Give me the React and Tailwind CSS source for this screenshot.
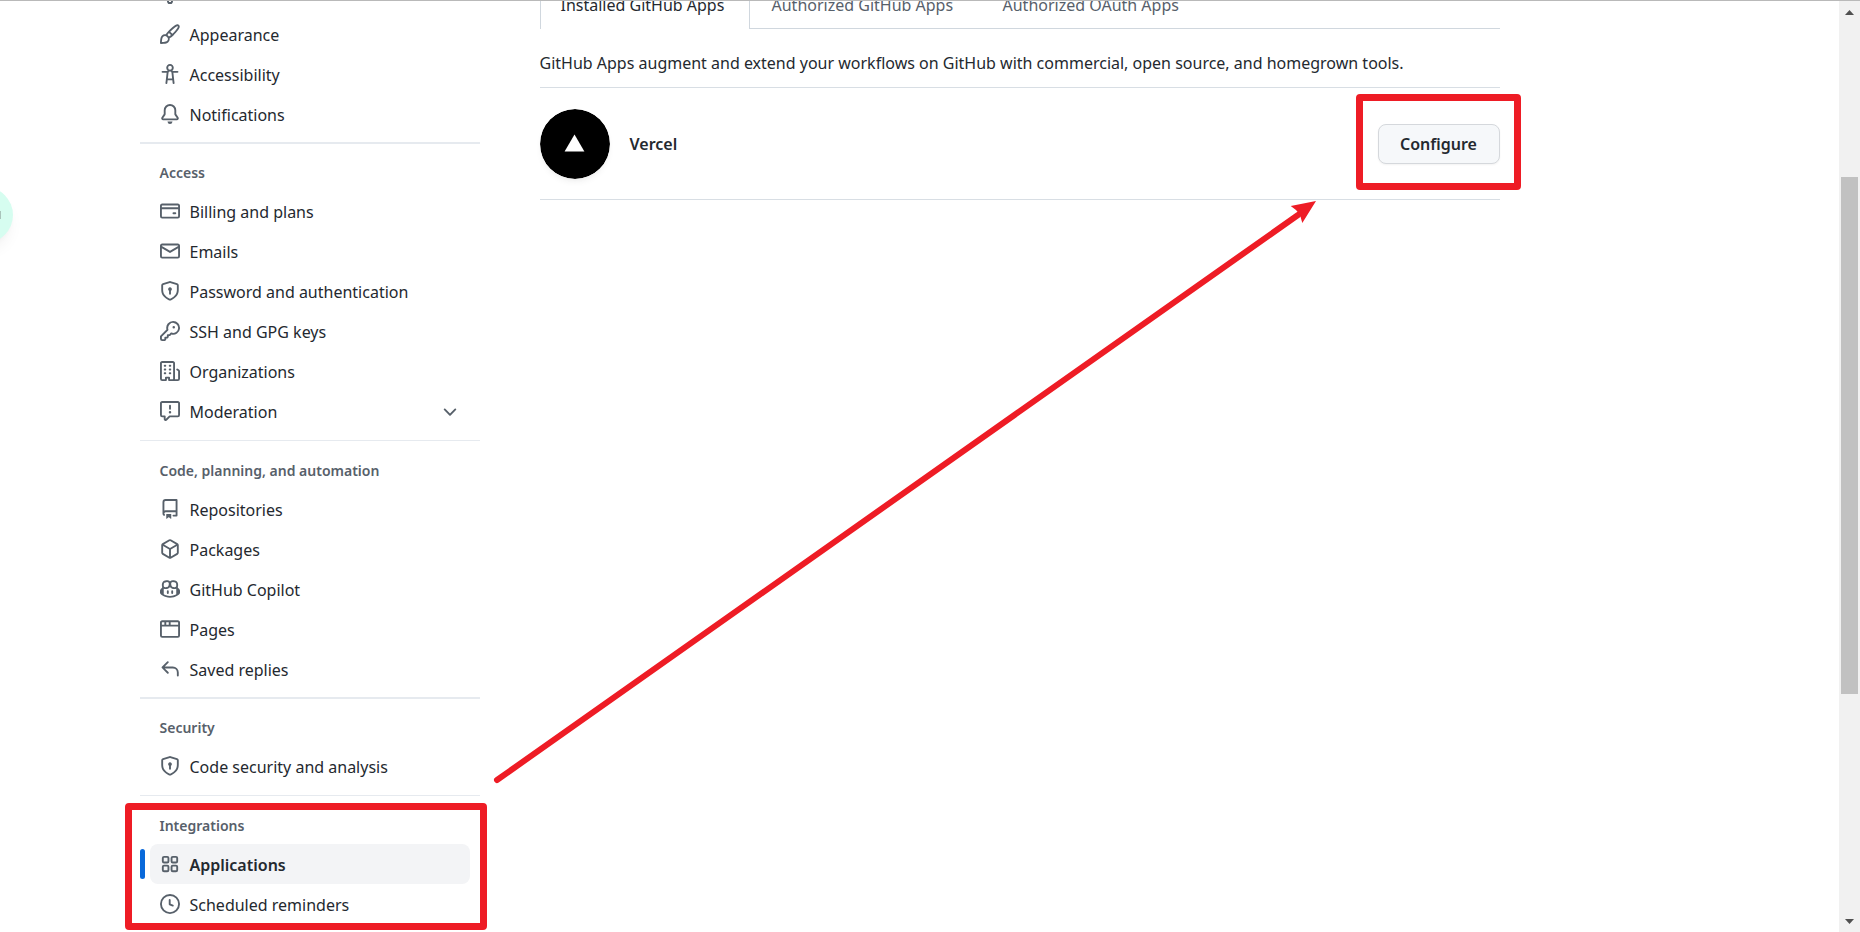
const ICONS = {
  gear: ["M8 0a8.2 8.2 0 0 1 .701.031C9.444.095 9.99.645 10.16 1.29l.288 1.107c.018.066.079.158.212.224.231.114.454.243.668.386.123.082.233.09.299.071l1.103-.303c.644-.176 1.392.021 1.82.63.27.385.506.792.704 1.218.315.675.111 1.422-.364 1.891l-.814.806c-.049.048-.098.147-.088.294.016.257.016.515 0 .772-.01.147.038.246.088.294l.814.806c.475.469.679 1.216.364 1.891a7.977 7.977 0 0 1-.704 1.217c-.428.61-1.176.807-1.82.63l-1.102-.302c-.067-.019-.177-.011-.3.071a5.909 5.909 0 0 1-.668.386c-.133.066-.194.158-.211.224l-.29 1.106c-.168.646-.715 1.196-1.458 1.26a8.006 8.006 0 0 1-1.402 0c-.743-.064-1.289-.614-1.458-1.26l-.289-1.106c-.018-.066-.079-.158-.212-.224a5.738 5.738 0 0 1-.668-.386c-.123-.082-.233-.09-.299-.071l-1.103.303c-.644.176-1.392-.021-1.82-.63a8.12 8.12 0 0 1-.704-1.218c-.315-.675-.111-1.422.363-1.891l.815-.806c.05-.048.098-.147.088-.294a6.214 6.214 0 0 1 0-.772c.01-.147-.038-.246-.088-.294l-.815-.806C.635 6.045.431 5.298.746 4.623a7.92 7.92 0 0 1 .704-1.217c.428-.61 1.176-.807 1.82-.63l1.102.302c.067.019.177.011.3-.071.214-.143.437-.272.668-.386.133-.066.194-.158.211-.224l.29-1.106C6.009.645 6.556.095 7.299.03 7.53.01 7.764 0 8 0Zm-.571 1.525c-.036.003-.108.036-.137.146l-.289 1.105c-.147.561-.549.967-.998 1.189-.173.086-.34.183-.5.29-.417.278-.97.423-1.529.27l-1.103-.303c-.109-.03-.175.016-.195.045-.22.312-.412.644-.573.99-.014.031-.021.11.059.19l.815.806c.411.406.562.957.53 1.456a4.709 4.709 0 0 0 0 .582c.032.499-.119 1.05-.53 1.456l-.815.806c-.081.08-.073.159-.059.19.162.346.353.677.573.989.02.03.085.076.195.046l1.102-.303c.56-.153 1.113-.008 1.53.27.161.107.328.204.501.29.447.222.85.629.997 1.189l.289 1.105c.029.109.101.143.137.146a6.6 6.6 0 0 0 1.142 0c.036-.003.108-.036.137-.146l.289-1.105c.147-.561.549-.967.998-1.189.173-.086.34-.183.5-.29.417-.278.97-.423 1.529-.27l1.103.303c.109.029.175-.016.195-.045.22-.313.411-.644.573-.99.014-.031.021-.11-.059-.19l-.815-.806c-.411-.406-.562-.957-.53-1.456a4.709 4.709 0 0 0 0-.582c-.032-.499.119-1.05.53-1.456l.815-.806c.081-.08.073-.159.059-.19a6.464 6.464 0 0 0-.573-.989c-.02-.03-.085-.076-.195-.046l-1.102.303c-.56.153-1.113.008-1.53-.27a4.44 4.44 0 0 0-.501-.29c-.447-.222-.85-.629-.997-1.189l-.289-1.105c-.029-.11-.101-.143-.137-.146a6.6 6.6 0 0 0-1.142 0Z"],
  paintbrush: ["M11.134 1.535c.7-.509 1.416-.942 2.076-1.155.649-.21 1.463-.267 2.069.34.603.601.568 1.411.368 2.07-.202.668-.624 1.39-1.125 2.096-1.011 1.424-2.496 2.987-3.775 4.249-1.098 1.084-2.132 1.839-3.04 2.3a3.744 3.744 0 0 1-1.055 3.217c-.431.431-1.065.691-1.657.861-.614.177-1.294.287-1.914.357A21.151 21.151 0 0 1 .797 16H.743l.007-.75H.749L.742 16a.75.75 0 0 1-.743-.742l.743-.008-.742.007v-.054a21.25 21.25 0 0 1 .13-2.284c.067-.647.187-1.287.358-1.914.17-.591.43-1.226.86-1.657a3.746 3.746 0 0 1 3.227-1.054c.466-.893 1.225-1.907 2.314-2.982 1.271-1.255 2.833-2.75 4.245-3.777ZM1.62 13.089c-.051.464-.086.929-.104 1.395.466-.018.932-.053 1.396-.104a10.511 10.511 0 0 0 1.668-.309c.526-.151.856-.325 1.011-.48a2.25 2.25 0 1 0-3.182-3.182c-.155.155-.329.485-.48 1.01a10.515 10.515 0 0 0-.309 1.67Zm10.396-10.34c-1.224.89-2.605 2.189-3.822 3.384l1.718 1.718c1.21-1.205 2.51-2.597 3.387-3.833.47-.662.78-1.227.912-1.662.134-.444.032-.551.009-.575h-.001V1.78c-.014-.014-.113-.113-.548.027-.432.14-.995.462-1.655.942Zm-4.832 7.266-.001.001a9.859 9.859 0 0 0 1.63-1.142L7.155 7.216a9.7 9.7 0 0 0-1.161 1.607c.482.302.889.71 1.19 1.192Z"],
  accessibility: ["M9.923 5.302c.063.063.122.129.178.198H14A.75.75 0 0 1 14 7h-3.3l.578 5.163.362 2.997a.75.75 0 0 1-1.49.18L9.868 13H6.132l-.282 2.34a.75.75 0 0 1-1.49-.18l.362-2.997L5.3 7H2a.75.75 0 0 1 0-1.5h3.9a2.54 2.54 0 0 1 .176-.198 3 3 0 1 1 3.847 0ZM9.2 7.073h-.001a1.206 1.206 0 0 0-2.398 0L6.305 11.5h3.39ZM9.5 3a1.5 1.5 0 1 0-3.001.001A1.5 1.5 0 0 0 9.5 3Z"],
  bell: ["M8 16a2 2 0 0 0 1.985-1.75c.017-.137-.097-.25-.235-.25h-3.5c-.138 0-.252.113-.235.25A2 2 0 0 0 8 16ZM3 5a5 5 0 0 1 10 0v2.947c0 .05.015.098.042.139l1.703 2.555A1.519 1.519 0 0 1 13.482 13H2.518a1.516 1.516 0 0 1-1.263-2.36l1.703-2.554A.255.255 0 0 0 3 7.947Zm5-3.5A3.5 3.5 0 0 0 4.5 5v2.947c0 .346-.102.683-.294.97l-1.703 2.556a.017.017 0 0 0-.003.01l.001.006c0 .002.002.004.004.006l.006.004.007.001h10.964l.007-.001.006-.004.004-.006.001-.007a.017.017 0 0 0-.003-.01l-1.703-2.554a1.745 1.745 0 0 1-.294-.97V5A3.5 3.5 0 0 0 8 1.5Z"],
  card: ["M10.75 9a.75.75 0 0 0 0 1.5h1.5a.75.75 0 0 0 0-1.5h-1.5Z", "M0 3.75C0 2.784.784 2 1.75 2h12.5c.966 0 1.75.784 1.75 1.75v8.5A1.75 1.75 0 0 1 14.25 14H1.75A1.75 1.75 0 0 1 0 12.25ZM14.5 6.5h-13v5.75c0 .138.112.25.25.25h12.5a.25.25 0 0 0 .25-.25Zm0-2.75a.25.25 0 0 0-.25-.25H1.75a.25.25 0 0 0-.25.25V5h13Z"],
  mail: ["M1.75 2h12.5c.966 0 1.75.784 1.75 1.75v8.5A1.75 1.75 0 0 1 14.25 14H1.75A1.75 1.75 0 0 1 0 12.25v-8.5C0 2.784.784 2 1.75 2ZM1.5 12.251c0 .138.112.25.25.25h12.5a.25.25 0 0 0 .25-.25V5.809L8.38 9.397a.75.75 0 0 1-.76 0L1.5 5.809v6.442Zm13-8.181v-.32a.25.25 0 0 0-.25-.25H1.75a.25.25 0 0 0-.25.25v.32L8 7.88Z"],
  shield: ["m8.533.133 5.25 1.68A1.75 1.75 0 0 1 15 3.48V7c0 1.566-.32 3.182-1.303 4.682-.983 1.498-2.585 2.813-5.032 3.855a1.697 1.697 0 0 1-1.33 0c-2.447-1.042-4.049-2.357-5.032-3.855C1.32 10.182 1 8.566 1 7V3.48a1.755 1.755 0 0 1 1.217-1.667l5.25-1.68a1.748 1.748 0 0 1 1.066 0Zm-.61 1.429.001.001-5.25 1.68a.251.251 0 0 0-.174.237V7c0 1.36.275 2.666 1.057 3.859.784 1.194 2.121 2.342 4.366 3.298a.196.196 0 0 0 .154 0c2.245-.957 3.582-2.103 4.366-3.297C13.225 9.666 13.5 8.358 13.5 7V3.48a.25.25 0 0 0-.174-.238l-5.25-1.68a.25.25 0 0 0-.153 0ZM9.5 6.5c0 .536-.286 1.032-.75 1.3v2.45a.75.75 0 0 1-1.5 0V7.8A1.5 1.5 0 1 1 9.5 6.5Z"],
  key: ["M10.5 0a5.499 5.499 0 1 1-1.288 10.848l-.932.932a.749.749 0 0 1-.53.22H7v.75a.749.749 0 0 1-.22.53l-.5.5a.749.749 0 0 1-.53.22H5v.75a.749.749 0 0 1-.22.53l-.5.5a.749.749 0 0 1-.53.22h-2A1.75 1.75 0 0 1 0 14.25v-2c0-.199.079-.389.22-.53l4.932-4.932A5.5 5.5 0 0 1 10.5 0Zm-4 5.5c-.001.431.069.86.205 1.269a.75.75 0 0 1-.181.768L1.5 12.56v1.69c0 .138.112.25.25.25h1.69l.06-.06v-1.19a.75.75 0 0 1 .75-.75h1.19l.06-.06v-1.19a.75.75 0 0 1 .75-.75h1.19l1.023-1.025a.75.75 0 0 1 .768-.18A4 4 0 1 0 6.5 5.5ZM11 6a1 1 0 1 1 0-2 1 1 0 0 1 0 2Z"],
  organization: ["M1.75 16A1.75 1.75 0 0 1 0 14.25V1.75C0 .784.784 0 1.75 0h8.5C11.216 0 12 .784 12 1.75v12.5c0 .085-.006.168-.018.25h2.268a.25.25 0 0 0 .25-.25V8.285a.25.25 0 0 0-.111-.208l-1.055-.703a.749.749 0 1 1 .832-1.248l1.055.703c.487.325.779.871.779 1.456v5.965A1.75 1.75 0 0 1 14.25 16h-3.5a.766.766 0 0 1-.197-.026c-.099.017-.2.026-.303.026h-3a.75.75 0 0 1-.75-.75V14h-1v1.25a.75.75 0 0 1-.75.75Zm-.25-1.75c0 .138.112.25.25.25H4v-1.25a.75.75 0 0 1 .75-.75h2.5a.75.75 0 0 1 .75.75v1.25h2.25a.25.25 0 0 0 .25-.25V1.75a.25.25 0 0 0-.25-.25h-8.5a.25.25 0 0 0-.25.25ZM3.75 6h.5a.75.75 0 0 1 0 1.5h-.5a.75.75 0 0 1 0-1.5ZM3 3.75A.75.75 0 0 1 3.75 3h.5a.75.75 0 0 1 0 1.5h-.5A.75.75 0 0 1 3 3.75Zm4 3A.75.75 0 0 1 7.75 6h.5a.75.75 0 0 1 0 1.5h-.5A.75.75 0 0 1 7 6.75ZM7.75 3h.5a.75.75 0 0 1 0 1.5h-.5a.75.75 0 0 1 0-1.5ZM3 9.75A.75.75 0 0 1 3.75 9h.5a.75.75 0 0 1 0 1.5h-.5A.75.75 0 0 1 3 9.75ZM7.75 9h.5a.75.75 0 0 1 0 1.5h-.5a.75.75 0 0 1 0-1.5Z"],
  report: ["M0 1.75C0 .784.784 0 1.75 0h12.5C15.216 0 16 .784 16 1.75v9.5A1.75 1.75 0 0 1 14.25 13H8.06l-2.573 2.573A1.458 1.458 0 0 1 3 14.543V13H1.75A1.75 1.75 0 0 1 0 11.25Zm1.75-.25a.25.25 0 0 0-.25.25v9.5c0 .138.112.25.25.25h2a.75.75 0 0 1 .75.75v2.19l2.72-2.72a.749.749 0 0 1 .53-.22h6.5a.25.25 0 0 0 .25-.25v-9.5a.25.25 0 0 0-.25-.25Zm7 2.25v2.5a.75.75 0 0 1-1.5 0v-2.5a.75.75 0 0 1 1.5 0ZM9 9a1 1 0 1 1-2 0 1 1 0 0 1 2 0Z"],
  repo: ["M2 2.5A2.5 2.5 0 0 1 4.5 0h8.75a.75.75 0 0 1 .75.75v12.5a.75.75 0 0 1-.75.75h-2.5a.75.75 0 0 1 0-1.5h1.75v-2h-8a1 1 0 0 0-.714 1.7.75.75 0 1 1-1.072 1.05A2.495 2.495 0 0 1 2 11.5Zm10.5-1h-8a1 1 0 0 0-1 1v6.708A2.486 2.486 0 0 1 4.5 9h8ZM5 12.25a.25.25 0 0 1 .25-.25h3.5a.25.25 0 0 1 .25.25v3.25a.25.25 0 0 1-.4.2l-1.45-1.087a.249.249 0 0 0-.3 0L5.4 15.7a.25.25 0 0 1-.4-.2Z"],
  package: ["m8.878.392 5.25 3.045c.54.314.872.89.872 1.514v6.098a1.75 1.75 0 0 1-.872 1.514l-5.25 3.045a1.75 1.75 0 0 1-1.756 0l-5.25-3.045A1.75 1.75 0 0 1 1 11.049V4.951c0-.624.332-1.201.872-1.514L7.122.392a1.75 1.75 0 0 1 1.756 0ZM7.875 1.69l-4.63 2.685L8 7.133l4.755-2.758-4.63-2.685a.248.248 0 0 0-.25 0ZM2.5 5.677v5.372c0 .09.047.171.125.216l4.625 2.683V8.432Zm6.25 8.271 4.625-2.683a.25.25 0 0 0 .125-.216V5.677L8.75 8.432Z"],
  copilot: ["M7.998 15.035c-4.562 0-7.873-2.914-7.998-3.749V9.338c.085-.628.677-1.686 1.588-2.065.013-.07.024-.143.036-.218.029-.183.06-.384.126-.612-.201-.508-.254-1.084-.254-1.656 0-.87.128-1.769.693-2.484.579-.733 1.494-1.124 2.724-1.261 1.206-.134 2.262.034 2.944.765.05.053.096.108.139.165.044-.057.094-.112.143-.165.682-.731 1.738-.899 2.944-.765 1.23.137 2.145.528 2.724 1.261.566.715.693 1.614.693 2.484 0 .572-.053 1.148-.254 1.656.066.228.098.429.126.612.012.076.024.148.037.218.924.385 1.522 1.471 1.591 2.095v1.872c0 .766-3.351 3.795-8.002 3.795Zm0-1.485c2.28 0 4.584-1.11 5.002-1.433V7.862l-.023-.116c-.49.21-1.075.291-1.727.291-1.146 0-2.059-.327-2.71-.991A3.222 3.222 0 0 1 8 6.303a3.24 3.24 0 0 1-.544.743c-.65.664-1.563.991-2.71.991-.652 0-1.236-.081-1.727-.291l-.023.116v4.255c.419.323 2.722 1.433 5.002 1.433ZM6.762 2.83c-.193-.206-.637-.413-1.682-.297-1.019.113-1.479.404-1.713.7-.247.312-.369.789-.369 1.554 0 .793.129 1.171.308 1.371.162.181.519.379 1.442.379.853 0 1.339-.235 1.638-.54.315-.322.527-.827.617-1.553.117-.935-.037-1.395-.241-1.614Zm4.155-.297c-1.044-.116-1.488.091-1.681.297-.204.219-.359.679-.242 1.614.091.726.303 1.231.618 1.553.299.305.784.54 1.638.54.922 0 1.28-.198 1.442-.379.179-.2.308-.578.308-1.371 0-.765-.123-1.242-.37-1.554-.233-.296-.693-.587-1.713-.7Z", "M6.25 9.037a.75.75 0 0 1 .75.75v1.501a.75.75 0 0 1-1.5 0V9.787a.75.75 0 0 1 .75-.75Zm4.25.75v1.501a.75.75 0 0 1-1.5 0V9.787a.75.75 0 0 1 1.5 0Z"],
  browser: ["M0 2.75C0 1.784.784 1 1.75 1h12.5c.966 0 1.75.784 1.75 1.75v10.5A1.75 1.75 0 0 1 14.25 15H1.75A1.75 1.75 0 0 1 0 13.25ZM14.5 6h-13v7.25c0 .138.112.25.25.25h12.5a.25.25 0 0 0 .25-.25Zm-6-3.5v2h6V2.75a.25.25 0 0 0-.25-.25ZM5 2.5v2h2v-2Zm-3.25 0a.25.25 0 0 0-.25.25V4.5h2v-2Z"],
  reply: ["M6.78 1.97a.75.75 0 0 1 0 1.06L3.81 6h6.44A4.75 4.75 0 0 1 15 10.75v2.5a.75.75 0 0 1-1.5 0v-2.5a3.25 3.25 0 0 0-3.25-3.25H3.81l2.97 2.97a.749.749 0 0 1-.326 1.275.749.749 0 0 1-.734-.215L1.47 7.28a.75.75 0 0 1 0-1.06l4.25-4.25a.75.75 0 0 1 1.06 0Z"],
  clock: ["M8 0a8 8 0 1 1 0 16A8 8 0 0 1 8 0ZM1.5 8a6.5 6.5 0 1 0 13 0 6.5 6.5 0 0 0-13 0Zm7-3.25v2.992l2.028.812a.75.75 0 0 1-.557 1.392l-2.5-1A.751.751 0 0 1 7 8.25v-3.5a.75.75 0 0 1 1.5 0Z"],
  chevron: ["M12.78 6.22a.749.749 0 0 1 0 1.06l-4.25 4.25a.749.749 0 0 1-1.06 0L3.22 7.28a.749.749 0 1 1 1.06-1.06L8 9.939l3.72-3.719a.749.749 0 0 1 1.06 0Z"],
};

function Icon({ name }) {
  return (
    <svg className="size-5 shrink-0 text-[#57606a]" viewBox="0 0 16 16" fill="currentColor" aria-hidden="true">
      {name === "apps" ? (
        <g fill="none" stroke="currentColor" strokeWidth="1.5">
          <rect x="2.25" y="2.25" width="4.5" height="4.5" rx="1" />
          <rect x="9.25" y="2.25" width="4.5" height="4.5" rx="1" />
          <rect x="2.25" y="9.25" width="4.5" height="4.5" rx="1" />
          <rect x="9.25" y="9.25" width="4.5" height="4.5" rx="1" />
        </g>
      ) : (
        ICONS[name].map((d) => <path key={d} d={d} />)
      )}
    </svg>
  );
}

const SECTIONS = [
  {
    items: [
      ["gear", "Account"],
      ["paintbrush", "Appearance"],
      ["accessibility", "Accessibility"],
      ["bell", "Notifications"],
    ],
  },
  {
    title: "Access",
    thick: true,
    items: [
      ["card", "Billing and plans"],
      ["mail", "Emails"],
      ["shield", "Password and authentication"],
      ["key", "SSH and GPG keys"],
      ["organization", "Organizations"],
      ["report", "Moderation"],
    ],
  },
  {
    title: "Code, planning, and automation",
    items: [
      ["repo", "Repositories"],
      ["package", "Packages"],
      ["copilot", "GitHub Copilot"],
      ["browser", "Pages"],
      ["reply", "Saved replies"],
    ],
  },
  { title: "Security", thick: true, items: [["shield", "Code security and analysis"]] },
  {
    title: "Integrations",
    marked: true,
    items: [
      ["apps", "Applications"],
      ["clock", "Scheduled reminders"],
    ],
  },
];

const ROW = "flex h-10 w-full items-center gap-[10px] rounded-lg px-[10px] text-left";

function NavItem({ icon, label }) {
  if (label === "Moderation") {
    return (
      <li className="px-[10px]">
        <button type="button" aria-expanded="false" className={ROW}>
          <Icon name={icon} />
          <span className="grow pt-px">{label}</span>
          <Icon name="chevron" />
        </button>
      </li>
    );
  }
  const active = label === "Applications";
  return (
    <li className="relative px-[10px]">
      {active && <span className="absolute top-[5px] left-0 h-[30px] w-[5px] rounded-full bg-[#0969da]" />}
      <a href="#" aria-current={active ? "page" : undefined} className={active ? `${ROW} bg-[#f3f4f6] font-semibold` : ROW}>
        <Icon name={icon} />
        <span className="pt-px">{label}</span>
      </a>
    </li>
  );
}

function NavSection({ section }) {
  return (
    <section className="relative">
      {section.title && (
        <>
          <hr className={section.thick ? "mt-2 border-t-2 border-[#e6eaef]" : "mt-[9px] border-t border-[#e6eaef]"} />
          <h3
            className={
              section.thick
                ? "flex h-[47px] items-end px-5 pb-[7px] text-sm leading-[22px] font-semibold text-[#57606a]"
                : "flex h-12 items-end px-5 pb-[7px] text-sm leading-[22px] font-semibold text-[#57606a]"
            }
          >
            {section.title}
          </h3>
        </>
      )}
      <ul>
        {section.items.map(([icon, label]) => (
          <NavItem key={label} icon={icon} label={label} />
        ))}
      </ul>
      {section.marked && (
        <div className="pointer-events-none absolute top-2 -right-[7px] -bottom-[6px] -left-[15px] rounded-sm border-7 border-[#ee1c25]" />
      )}
    </section>
  );
}

function Scrollbar() {
  return (
    <div className="flex w-[21px] shrink-0 flex-col items-center justify-between bg-[#f1f1f1] pt-[9px] pb-2" aria-hidden="true">
      <svg className="h-[5px] w-[9px]" viewBox="0 0 9 5" fill="#505050">
        <path d="M4.500 0 9 5H0Z" />
      </svg>
      <div className="mt-[162px] mb-[225px] w-[17px] grow bg-[#c1c1c1]" />
      <svg className="h-[5px] w-[9px]" viewBox="0 0 9 5" fill="#505050">
        <path d="M0 0H9L4.500 5Z" />
      </svg>
    </div>
  );
}

export default function App() {
  return (
    <div className="relative flex h-screen overflow-hidden border-t border-[#b9b9b9] bg-white font-['Noto_Sans','Open_Sans',sans-serif] text-base text-[#24292f]">
      <div className="min-w-0 grow">
        <div className="mx-auto flex max-w-[1600px] gap-[60px] pr-5 pl-5">
          <nav aria-label="Settings" className="-mt-[27px] w-[340px] shrink-0">
            {SECTIONS.map((s, i) => (
              <NavSection key={i} section={s} />
            ))}
          </nav>

          <main className="min-w-0 max-w-[960px] grow">
            <div className="-mt-5 flex h-12 text-[#57606a]">
              <a href="#" aria-current="page" className="min-w-[210px] border-x border-[#d0d7de] px-5 pt-3 leading-6 text-[#24292f]">
                Installed GitHub Apps
              </a>
              <div className="flex grow border-b border-[#d0d7de]">
                <a href="#" className="min-w-[231px] px-[22px] pt-3 leading-6">Authorized GitHub Apps</a>
                <a href="#" className="min-w-[231px] px-[22px] pt-3 leading-6">Authorized OAuth Apps</a>
              </div>
            </div>
            <p className="pt-[22px] pb-3 leading-6">
              GitHub Apps augment and extend your workflows on GitHub with commercial, open source, and homegrown tools.
            </p>
            <div className="flex items-center gap-5 border-y border-[#d8dee4] pt-[21px] pb-5">
              <svg className="size-[70px] shrink-0 rounded-full shadow-md shadow-black/5" viewBox="0 0 70 70" role="img" aria-label="Vercel logo">
                <circle cx="35" cy="35" r="35" fill="#000" />
                <path d="M34.500 25.500 44.400 42.500H24.600Z" fill="#fff" />
              </svg>
              <a href="#" className="grow font-semibold">Vercel</a>
              <div className="relative">
                <button type="button" className="h-10 w-[122px] rounded-lg border border-[#d5d8dc] bg-[#f6f8fa] font-semibold shadow-xs">
                  Configure
                </button>
                <div className="pointer-events-none absolute -top-[30px] -right-[21px] -bottom-[26px] -left-[22px] rounded-sm border-7 border-[#ee1c25]" />
              </div>
            </div>
          </main>
        </div>
      </div>

      <div className="absolute top-[186px] -left-[43px] flex size-14 items-center justify-end rounded-full bg-[#d6fdf0] shadow-lg shadow-black/5">
        <span className="mr-3 h-2 w-[2px] bg-[#a9c4bb]" />
      </div>

      <svg className="pointer-events-none absolute top-[190px] left-[480px] h-[600px] w-[850px]" viewBox="480 191 850 600" aria-hidden="true">
        <path d="M497 780 1298 215" stroke="#ee1c25" strokeWidth="6" strokeLinecap="round" />
        <path d="M1316 201 1302.300 223 1300 215 1296 210 1290.700 206Z" fill="#ee1c25" />
      </svg>

      <Scrollbar />
    </div>
  );
}
